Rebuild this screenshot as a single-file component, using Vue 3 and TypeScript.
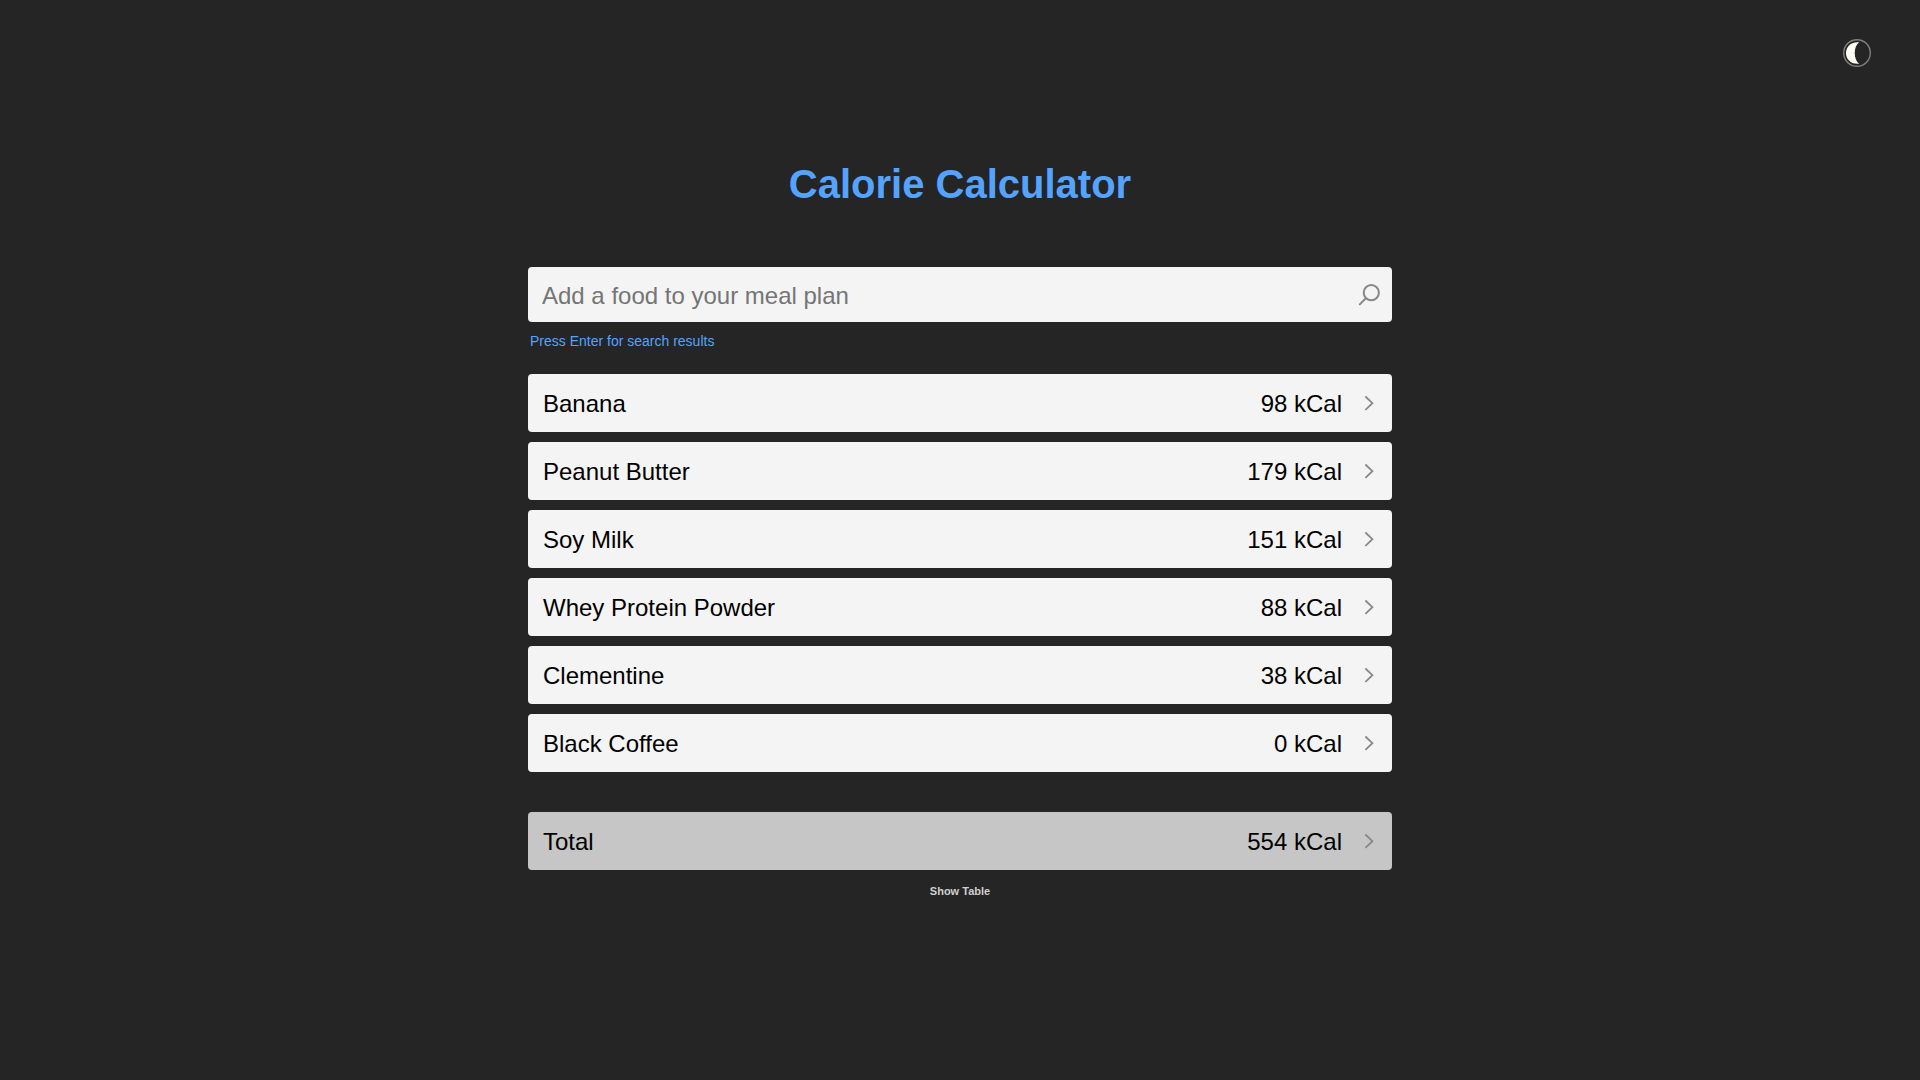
<script setup lang="ts">
import { computed, ref } from 'vue'

interface Food {
  name: string
  kcal: number
}

const query = ref('')
const foods = ref<Food[]>([
  { name: 'Banana', kcal: 98 },
  { name: 'Peanut Butter', kcal: 179 },
  { name: 'Soy Milk', kcal: 151 },
  { name: 'Whey Protein Powder', kcal: 88 },
  { name: 'Clementine', kcal: 38 },
  { name: 'Black Coffee', kcal: 0 },
])

const total = computed(() => foods.value.reduce((sum, food) => sum + food.kcal, 0))
</script>

<template>
  <div class="page">
    <header class="topbar">
      <button class="theme" type="button" aria-label="Toggle theme">
        <svg width="28" height="28" viewBox="0 0 28 28" fill="none">
          <circle cx="14" cy="14" r="13.3" stroke="#808080" stroke-width="1.4" />
          <path d="M16.2 3.2C7 2.4 3 8.6 3 14S7 25.6 16.2 24.8C10.2 20.6 10.2 7.4 16.2 3.2Z" fill="#fffff4" />
        </svg>
      </button>
    </header>

    <main class="planner">
      <h1 class="title">Calorie Calculator</h1>

      <form class="search" @submit.prevent>
        <div class="field">
          <input
            id="food"
            v-model="query"
            class="input"
            type="text"
            placeholder="Add a food to your meal plan"
            autocomplete="off"
          />
          <button class="find" type="submit" aria-label="Search">
            <svg width="22" height="22" viewBox="0 0 22 22" fill="none" stroke="#888" stroke-width="2">
              <circle cx="13.3" cy="8.7" r="7.6" />
              <path d="M7.8 14.2L1.8 20.4" stroke-linecap="round" />
            </svg>
          </button>
        </div>
        <label class="hint" for="food">Press Enter for search results</label>
      </form>

      <ul class="foods">
        <li v-for="food in foods" :key="food.name">
          <button class="row" type="button">
            <span class="name">{{ food.name }}</span>
            <span class="kcal">{{ food.kcal }} kCal</span>
            <svg class="chevron" width="10" height="16" viewBox="0 0 10 16">
              <path d="M1.4 1.5L8.4 8.2L1.4 14.9" />
            </svg>
          </button>
        </li>
      </ul>

      <button class="row total" type="button">
        <span class="name">Total</span>
        <span class="kcal">{{ total }} kCal</span>
        <svg class="chevron" width="10" height="16" viewBox="0 0 10 16">
          <path d="M1.4 1.5L8.4 8.2L1.4 14.9" />
        </svg>
      </button>

      <button class="show" type="button">Show Table</button>
    </main>
  </div>
</template>

<style>
body {
  margin: 0;
  background: #252525;
}
</style>

<style scoped>
.page {
  box-sizing: border-box;
  min-height: 100vh;
  background: #252525;
  color: #000;
  font-family: 'Liberation Sans', Arial, sans-serif;
}

button {
  margin: 0;
  padding: 0;
  border: 0;
  background: none;
  color: inherit;
  font: inherit;
  cursor: pointer;
}

svg {
  display: block;
}

.topbar {
  display: flex;
  justify-content: flex-end;
  padding: 39px 49px 0;
}

.planner {
  display: flex;
  flex-direction: column;
  width: 45%;
  margin: 0 auto;
  padding: 93px 0 48px;
}

.title {
  margin: 0;
  color: #54a3ff;
  font-size: 40px;
  font-weight: 700;
  line-height: 48px;
  text-align: center;
}

.search {
  display: flex;
  flex-direction: column;
  margin-top: 59px;
}

.field {
  display: flex;
  align-items: center;
  height: 55px;
  padding: 0 12px 0 14px;
  border-radius: 4px;
  background: #f4f4f4;
}

.input {
  box-sizing: border-box;
  flex: 1;
  min-width: 0;
  height: 100%;
  padding: 2px 0 0;
  border: 0;
  outline: 0;
  background: transparent;
  color: #000;
  font: inherit;
  font-size: 24px;
}

.input::placeholder {
  color: #757575;
}

.hint {
  padding: 10px 2px 0;
  color: #54a3ff;
  font-size: 14px;
  line-height: 18px;
}

.foods {
  display: flex;
  flex-direction: column;
  gap: 10px;
  margin: 24px 0 0;
  padding: 0;
  list-style: none;
}

.row {
  display: flex;
  align-items: center;
  width: 100%;
  height: 58px;
  padding: 0 18px 0 15px;
  border-radius: 4px;
  background: #f4f4f4;
  font-size: 24px;
  line-height: 28px;
}

.name,
.kcal {
  padding-top: 2px;
}

.name {
  flex: 1;
  text-align: left;
}

.chevron {
  margin-left: 22px;
  fill: none;
  stroke: #888;
  stroke-width: 1.8;
}

.total {
  margin-top: 40px;
  background: #c6c6c6;
}

.show {
  align-self: center;
  margin-top: 14px;
  color: #d0d0d0;
  font-size: 11px;
  font-weight: 700;
  line-height: 14px;
}
</style>
